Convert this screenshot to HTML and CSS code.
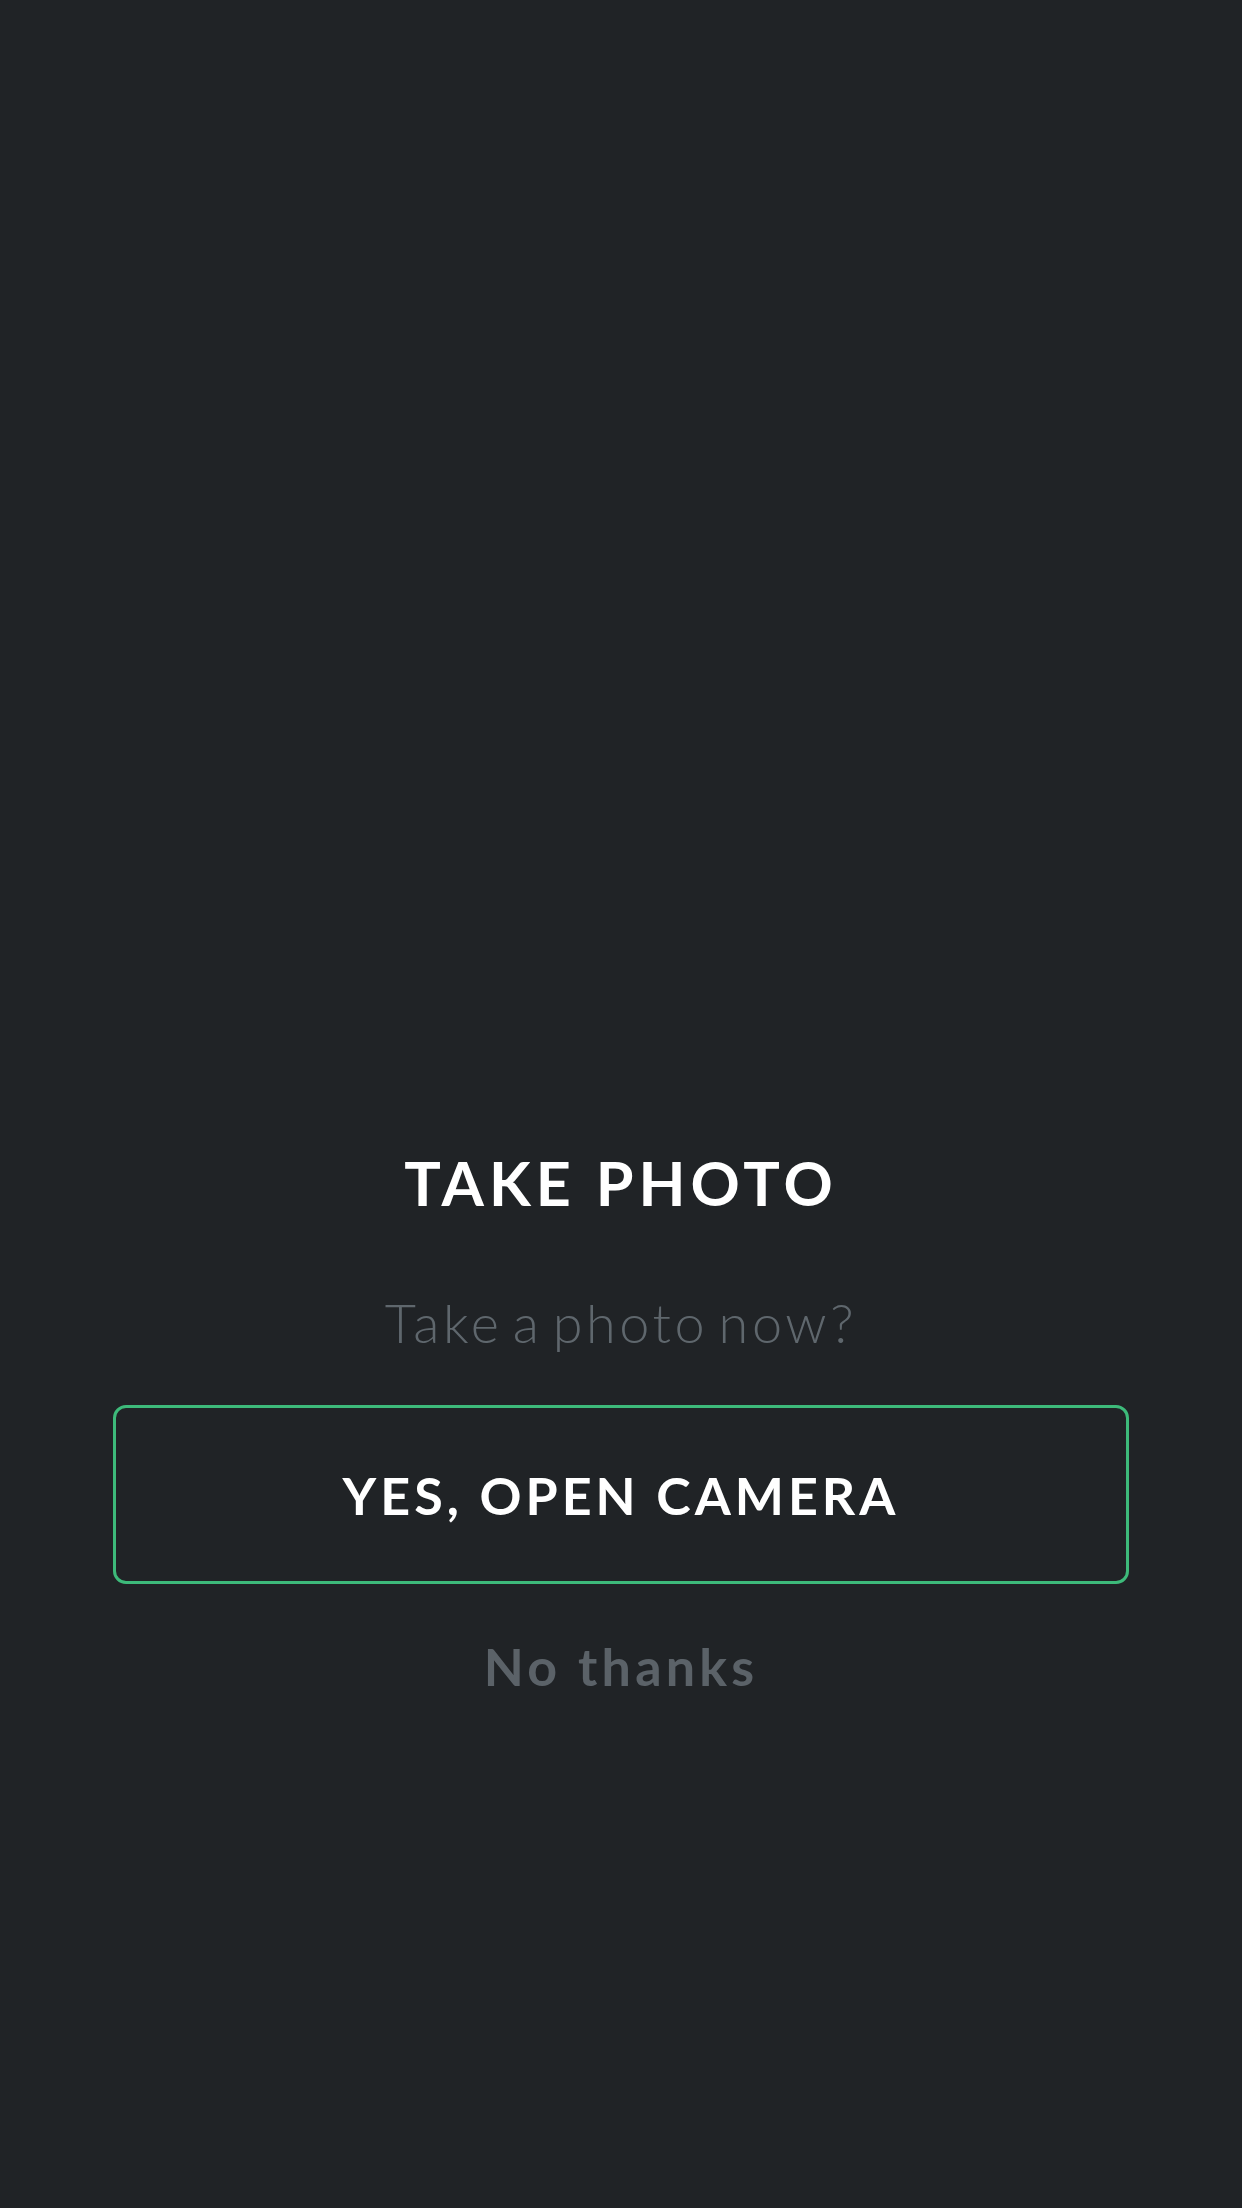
FILE: index.html
```html
<!DOCTYPE html>
<html lang="en">
<head>
<meta charset="utf-8">
<title>Take Photo</title>
<link rel="stylesheet" href="styles.css">
</head>
<body>
<main class="screen">
  <section class="dialog">
    <h1 class="title">TAKE PHOTO</h1>
    <p class="subtitle">Take a photo now?</p>
    <button class="primary" type="button">YES, OPEN CAMERA</button>
    <button class="secondary" type="button">No thanks</button>
  </section>
</main>
</body>
</html>
```

FILE: styles.css
```css
html, body {
  margin: 0;
  padding: 0;
  background: #202326;
}
.screen {
  width: 1242px;
  height: 2208px;
  box-sizing: border-box;
  padding-top: 1148px;
  display: flex;
  flex-direction: column;
  align-items: center;
}
.dialog {
  width: 1016px;
  display: flex;
  flex-direction: column;
  align-items: center;
}
.title {
  margin: 0;
  font-family: "Lato", "Liberation Sans", sans-serif;
  font-weight: 700;
  font-size: 61px;
  line-height: 70px;
  letter-spacing: 5px;
  color: #ffffff;
}
.subtitle {
  margin: 73px 0 0;
  font-family: "Lato", "Liberation Sans", sans-serif;
  font-weight: 300;
  font-size: 54px;
  line-height: 64px;
  letter-spacing: 3.6px;
  word-spacing: -8px;
  color: #5f676d;
}
.primary {
  margin-top: 50px;
  width: 1016px;
  height: 179px;
  box-sizing: border-box;
  border: 3px solid #3dba7a;
  border-radius: 13px;
  background: transparent;
  font-family: "Lato", "Liberation Sans", sans-serif;
  font-weight: 700;
  font-size: 52px;
  letter-spacing: 4px;
  color: #ffffff;
  padding: 0;
}
.secondary {
  margin-top: 50px;
  border: 0;
  background: transparent;
  padding: 0;
  font-family: "Lato", "Liberation Sans", sans-serif;
  font-weight: 700;
  font-size: 52px;
  line-height: 64px;
  letter-spacing: 4.2px;
  color: #5b6268;
}
```
